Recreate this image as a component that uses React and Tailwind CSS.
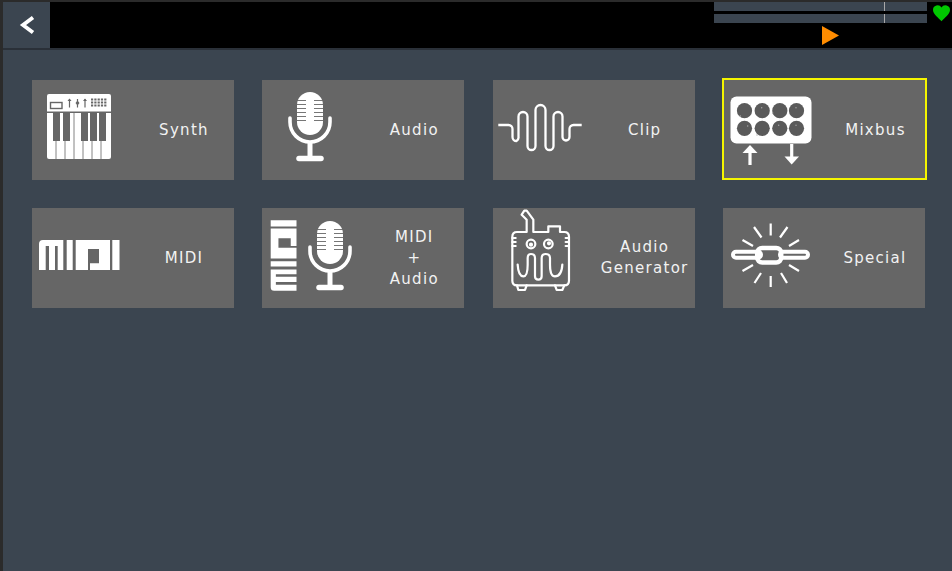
import React from "react";

// Icons are drawn in the left 102x100 part of a card, so coordinates are card pixels
const SynthIcon = () => (
  <>
    <path d="M17 14h60a2 2 0 0 1 2 2v15.5H15V16a2 2 0 0 1 2-2z" fill="white" />
    <rect x="18.5" y="22.5" width="11.5" height="6" fill="none" stroke="#666" strokeWidth="1.4" />
    <path d="M37.5 19v8.5M45.5 19v8.5M53 19v8.5" stroke="#666" strokeWidth="1.2" />
    <path d="M35.5 21l2-2.5 2 2.5zM43.5 23l2-2.5 2 2.5 -2 2.5zM51 21l2-2.5 2 2.5z" fill="#666" />
    <g fill="#666">
      {[59, 62.3, 65.6, 68.9, 72.2].map((x) =>
        [18.5, 21.5, 24.5].map((y) => <rect key={`${x}-${y}`} x={x} y={y} width="2.2" height="2" />)
      )}
    </g>
    <path d="M15 33h64v44a2 2 0 0 1-2 2H17a2 2 0 0 1-2-2z" fill="white" />
    <path d="M24 33v46M33 33v46M42 33v46M51 33v46M60 33v46M69 33v46" stroke="#666" strokeWidth="0.8" />
    <g fill="#666">
      <rect x="21" y="33" width="7" height="28" />
      <rect x="31" y="33" width="7" height="28" />
      <rect x="49" y="33" width="7" height="28" />
      <rect x="58" y="33" width="7" height="28" />
      <rect x="67" y="33" width="7" height="28" />
    </g>
  </>
);

const MicIcon = ({ dx = 0, dy = 0 }) => (
  <g transform={`translate(${dx} ${dy})`}>
    <path d="M35 25a13 13 0 0 1 26 0v17a13 13 0 0 1-26 0z" fill="white" />
    <path
      d="M35 20.5h9M52 20.5h9M35 24.5h9M52 24.5h9M35 28.5h9M52 28.5h9M35 32.5h9M52 32.5h9M35 36.5h9M52 36.5h9M35 40.5h9M52 40.5h9"
      stroke="#666"
      strokeWidth="0.9"
    />
    <path d="M28 38v4a20 20 0 0 0 40 0v-4" fill="none" stroke="white" strokeWidth="3.6" strokeLinecap="round" />
    <path d="M48 62v15" stroke="white" strokeWidth="5" />
    <path d="M37 78.5h22" stroke="white" strokeWidth="5.5" strokeLinecap="round" />
  </g>
);

const ClipIcon = () => (
  <path
    d="M5.3 45H15.5a4 4 0 0 1 4 4V57a4 4 0 0 0 4 4 4 4 0 0 0 2-4V36.5a4.5 4.5 0 0 1 9 0V66a4 4 0 0 0 8 0V30a5 5 0 0 1 10 0V66a4 4 0 0 0 8 0V36.5a4.5 4.5 0 0 1 9 0V57a3.5 3.5 0 0 0 7 0V49a4 4 0 0 1 4-4H88.7"
    fill="none"
    stroke="white"
    strokeWidth="2.3"
    strokeLinejoin="round"
  />
);

const knobGlints = [
  [17.3, 36],
  [38.7, 27.7],
  [49.7, 33],
  [73, 27.7],
  [24.7, 46],
  [34, 55],
  [55.7, 45.3],
  [73, 45.3],
];

const MixbusIcon = () => (
  <g transform="translate(-1 1)">
    <rect x="7.5" y="16.5" width="81" height="47" rx="6" fill="white" />
    <g fill="#5a5a5a">
      {[21.5, 39.2, 56.8, 73.5].map((x) =>
        [30.7, 48.3].map((y) => <circle key={`${x}-${y}`} cx={x} cy={y} r="7.6" />)
      )}
    </g>
    <g fill="#a8a8a8">
      {knobGlints.map(([x, y]) => (
        <circle key={`${x}-${y}`} cx={x} cy={y} r="0.7" />
      ))}
    </g>
    <path d="M27 85V70" stroke="white" strokeWidth="3.2" />
    <path d="M19.5 73L27 65 34.5 73z" fill="white" />
    <path d="M68.7 64V77" stroke="white" strokeWidth="3.2" />
    <path d="M61.5 76.5L68.7 84.5 76 76.5z" fill="white" />
  </g>
);

const MidiLogo = () => (
  <path
    d="M7 36a4 4 0 0 1 4-4H31.3V62H25.7V38H23V62H17V38H13.7V62H7zM34.7 32H40.7V62H34.7zM43.7 32H78V62H58V55.3H67V41H56V62H43.7zM80.3 32H87.5V62H80.3z"
    fill="white"
  />
);

// drawn at 3x, from a crop of the icon
const GeneratorIcon = () => (
  <g
    transform="translate(12 0) scale(0.3333)"
    fill="none"
    stroke="white"
    strokeWidth="6.6"
    strokeLinejoin="round"
    strokeLinecap="round"
  >
    <path d="M36 72H65V35L50 20 58 8H65L85 35V72H130V55H165V72H178Q192 72 192 86V218Q192 232 178 232H36Q22 232 22 218V86Q22 72 36 72z" />
    <path d="M22 90H32M22 102H32M22 114H32M192 90H182M192 102H182M192 114H182" />
    <path d="M36 232L40 246H60L65 232M150 232L155 246H172L178 232" />
    <circle cx="78" cy="108" r="13" />
    <circle cx="130" cy="108" r="13" />
    <circle cx="78" cy="110" r="3" fill="white" />
    <circle cx="132" cy="106" r="3" fill="white" />
    <path d="M38 170Q40 205 55 205 68 205 68 170V150Q68 138 78 138 90 138 90 150V205Q90 215 100 215 110 215 110 205V150Q110 138 122 138 135 138 135 150V170Q135 205 150 205 170 205 172 170" />
  </g>
);

const SpecialIcon = () => (
  <>
    <path
      d="M47.7 15.5V27.5M31 19L38.5 29.5M64.5 19L57 29.5M19.5 32L30 38M76 32L66 38M19.5 63L30 57M76 63L66 57M31.5 75L38 65M64 75L58 65M47.7 68V79"
      stroke="white"
      strokeWidth="2.2"
      fill="none"
    />
    <g fill="none" stroke="white" strokeLinejoin="round">
      <rect x="10" y="43.7" width="28" height="6" rx="3" strokeWidth="4" />
      <rect x="57" y="43.7" width="28" height="6" rx="3" strokeWidth="4" />
      <rect x="34.2" y="40" width="24" height="14.5" rx="5" strokeWidth="4.5" />
    </g>
  </>
);

const cards = [
  { label: ["Synth"], icon: <SynthIcon /> },
  { label: ["Audio"], icon: <MicIcon /> },
  { label: ["Clip"], icon: <ClipIcon /> },
  { label: ["Mixbus"], icon: <MixbusIcon />, selected: true },
  { label: ["MIDI"], icon: <MidiLogo /> },
  {
    label: ["MIDI", "+", "Audio"],
    icon: (
      <>
        <g transform="translate(8.7 82.7) rotate(-90) scale(0.875 0.86) translate(-7 -32)">
          <MidiLogo />
        </g>
        <MicIcon dx={20} dy={1} />
      </>
    ),
  },
  { label: ["Audio", "Generator"], icon: <GeneratorIcon /> },
  { label: ["Special"], icon: <SpecialIcon /> },
];

const Card = ({ label, icon, selected }) => (
  <div
    className={
      selected
        ? "flex items-center bg-[#666666] border-2 border-[#f5f500] w-[205px] h-[102px] -ml-px -mt-[2px]"
        : "flex items-center bg-[#666666] w-[202px] h-[100px]"
    }
  >
    <svg width="102" height="100" viewBox="0 0 102 100" className="shrink-0">
      {icon}
    </svg>
    <div
      className={
        selected
          ? "w-[100px] mt-[2px] text-center text-[15px] leading-[21px] tracking-[1.3px] text-[#f2f2f2] font-['DejaVu_Sans',sans-serif]"
          : "w-[100px] text-center text-[15px] leading-[21px] tracking-[1.3px] text-[#f2f2f2] font-['DejaVu_Sans',sans-serif]"
      }
    >
      {label.map((line) => (
        <div key={line}>{line}</div>
      ))}
    </div>
  </div>
);

const MeterBar = () => (
  <div className="flex h-[9px] w-[213px] bg-[#3b4550]">
    <div className="ml-[170px] w-px bg-[#a8a8a8]" />
  </div>
);

export default function App() {
  return (
    <div className="flex flex-col h-screen w-screen overflow-hidden bg-[#3b4550] border-l-[3px] border-t-2 border-[#2b2b2b]">
      <header className="flex h-[46px] shrink-0 bg-black">
        <button className="flex w-[47px] items-center justify-center bg-[#3b4550]">
          <svg width="18" height="20" viewBox="0 0 18 20">
            <path d="M15 2.5L5 10l10 7.5" fill="none" stroke="white" strokeWidth="3.8" />
          </svg>
        </button>
        <div className="flex flex-1 justify-end">
          <div className="flex flex-col gap-[3px] w-[213px]">
            <MeterBar />
            <MeterBar />
            <svg width="17" height="19" viewBox="0 0 17 19" className="ml-[108px]">
              <path d="M0 0L17 9.5 0 19z" fill="#ff8c00" />
            </svg>
          </div>
          <svg width="17" height="17" viewBox="0 0 24 24" className="mt-[3px] ml-[6px] mr-[2px]">
            <path
              d="M12 23C8 18 0 13 0 7a6.5 6.5 0 0 1 12-3.5A6.5 6.5 0 0 1 24 7c0 6-8 11-12 16z"
              fill="#00c800"
            />
          </svg>
        </div>
      </header>
      <div className="h-[2px] shrink-0 bg-[#2a3038]" />
      <main className="grid grid-cols-[repeat(4,202px)] gap-x-[28.33px] gap-y-[28px] pl-[29px] pt-[30px]">
        {cards.map((card) => (
          <Card key={card.label.join(" ")} {...card} />
        ))}
      </main>
    </div>
  );
}
